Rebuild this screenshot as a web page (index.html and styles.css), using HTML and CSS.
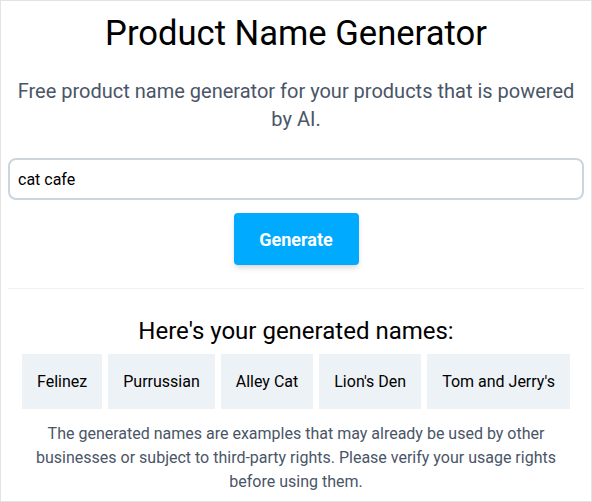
FILE: index.html
```html
<!DOCTYPE html>
<html lang="en">
    <head>
        <meta charset="UTF-8">
        <meta name="viewport" content="width=device-width, initial-scale=1.0">
        <title>Product Name Generator</title>
        <link rel="stylesheet" href="styles.css">
    </head>
    <body>
        <div class="page">
            <h1 class="title">Product Name Generator</h1>
            <p class="intro">Free product name generator for your products that is powered by AI.</p>

            <input type="text" class="topicInput" value="cat cafe">
            <div class="actions">
                <button type="button" class="generateBtn">Generate</button>
            </div>

            <hr class="divider">

            <h2 class="resultsTitle">Here's your generated names:</h2>
            <ul class="nameList">
                <li>Felinez</li>
                <li>Purrussian</li>
                <li>Alley Cat</li>
                <li>Lion's Den</li>
                <li>Tom and Jerry's</li>
            </ul>
            <p class="disclaimer">The generated names are examples that may already be used by other businesses or subject to third-party rights. Please verify your usage rights before using them.</p>
        </div>
    </body>
</html>
```

FILE: styles.css
```css
html, body {
    margin: 0;
    padding: 0;
}
body {
    font-family: Roboto, "Noto Sans", sans-serif;
    color: #000;
    background: #fff;
}
.page {
    box-sizing: border-box;
    width: 592px;
    height: 502px;
    border: 1px solid #e6e1e2;
    padding: 12px 7px 0;
    overflow: hidden;
}
.title {
    margin: 0;
    font-size: 34.6px;
    line-height: 40px;
    font-weight: 400;
    text-align: center;
}
.intro {
    margin: 24px 0 0;
    padding: 0 8px;
    font-size: 20px;
    line-height: 28px;
    color: #4a5568;
    text-align: center;
}
.topicInput {
    display: block;
    box-sizing: border-box;
    width: 100%;
    height: 42px;
    margin-top: 25px;
    padding: 0 8px;
    border: 2px solid #cbd5e0;
    border-radius: 8px;
    font-family: inherit;
    font-size: 16px;
    color: #000;
    outline: none;
}
.actions {
    display: flex;
    justify-content: center;
    margin-top: 13px;
}
.generateBtn {
    width: 125px;
    height: 52px;
    border: none;
    border-radius: 4px;
    background: #00aaff;
    color: #fff;
    font-family: inherit;
    font-size: 18px;
    font-weight: 700;
    box-shadow: 0 4px 6px -1px rgba(0, 0, 0, 0.12), 0 2px 4px -1px rgba(0, 0, 0, 0.07);
    cursor: pointer;
}
.divider {
    margin: 23px 0 0;
    border: none;
    border-top: 1px solid #edf2f7;
}
.resultsTitle {
    margin: 26px 0 0;
    font-size: 24px;
    line-height: 32px;
    font-weight: 400;
    text-align: center;
}
.nameList {
    display: flex;
    justify-content: center;
    gap: 6px;
    margin: 7px 0 0;
    padding: 0;
    list-style: none;
}
.nameList li {
    padding: 16px 15px;
    background: #edf2f7;
    font-size: 16px;
    line-height: 23px;
    white-space: nowrap;
}
.disclaimer {
    margin: 13px 0 0;
    padding: 0 8px;
    font-size: 16px;
    line-height: 24px;
    color: #4a5568;
    text-align: center;
}
```
